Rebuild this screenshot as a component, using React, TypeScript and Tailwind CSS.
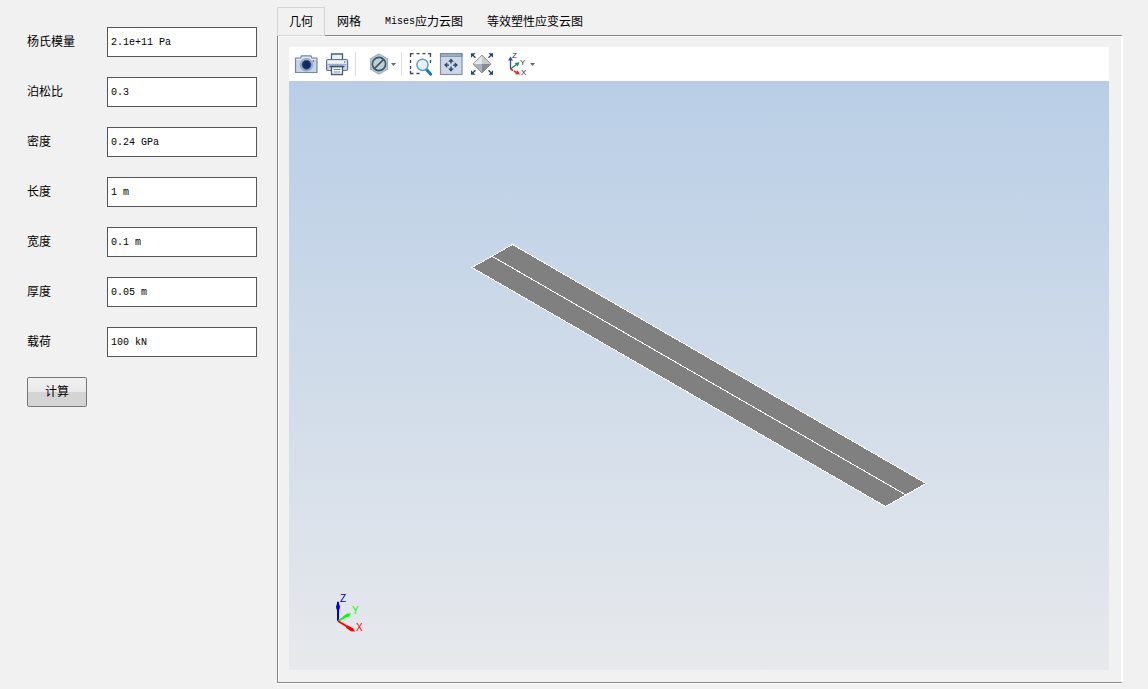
import { useState } from 'react'
import type { ReactNode } from 'react'

/* ── Data ── */

interface Field {
  id: string
  label: string
  value: string
}

const FIELDS: Field[] = [
  { id: 'young', label: '杨氏模量', value: '2.1e+11 Pa' },
  { id: 'poisson', label: '泊松比', value: '0.3' },
  { id: 'density', label: '密度', value: '0.24 GPa' },
  { id: 'length', label: '长度', value: '1 m' },
  { id: 'width', label: '宽度', value: '0.1 m' },
  { id: 'thickness', label: '厚度', value: '0.05 m' },
  { id: 'load', label: '载荷', value: '100 kN' },
]

const TABS = [
  { latin: '', text: '几何' },
  { latin: '', text: '网格' },
  { latin: 'Mises', text: '应力云图' },
  { latin: '', text: '等效塑性应变云图' },
]

/* ── Icons ── */

function Icon({ children }: { children: ReactNode }) {
  return (
    <svg viewBox="0 0 24 24" className="block h-6 w-6 shrink-0" fill="none" aria-hidden="true">
      {children}
    </svg>
  )
}

function CameraIcon() {
  return (
    <Icon>
      <path d="M1.500 6h5l1-2.200h9.500l1 2.200h5v14.500h-21.500z" fill="#c6d4e6" stroke="#7388a6" strokeWidth="1.200" strokeLinejoin="round" />
      <path d="M2.500 7.500h5l1-2.200h7.500l1 2.200h5" stroke="#e6edf5" />
      <circle cx="12.500" cy="12.800" r="6.300" fill="#a9bcd6" stroke="#7c91b2" strokeWidth=".6" />
      <circle cx="12.500" cy="12.800" r="4.500" fill="#122c60" stroke="#405f92" />
      <circle cx="19.500" cy="9" r=".8" fill="#34558a" />
    </Icon>
  )
}

function PrinterIcon() {
  return (
    <Icon>
      <path d="M6.500 8.500V2h11v6.500" fill="#edf2f8" stroke="#465d88" strokeWidth="1.300" />
      <rect x="1.600" y="7.500" width="21" height="11" rx="1.500" fill="#c9d4e3" stroke="#5f7397" strokeWidth="1.200" />
      <path d="M2.500 8.500h19v3h-19z" fill="#edf2f7" />
      <path d="M2.500 12.500h19" stroke="#a3b1c7" />
      <path d="M19 10h1.500" stroke="#2d497b" />
      <path d="M6.500 14.500h11v8h-11z" fill="#fff" stroke="#465d88" strokeWidth="1.300" />
      <path d="M4.500 14.500h15" stroke="#34507e" strokeWidth="1.400" />
      <path d="M8.500 17.500h7M8.500 20h7" stroke="#7287a7" />
    </Icon>
  )
}

function HexagonIcon() {
  return (
    <Icon>
      <path d="M12 2l8.500 4.800v10.400L12 22l-8.500-4.800V6.800z" fill="#b3cdd2" stroke="#9ab3b9" strokeWidth="1.200" />
      <circle cx="12" cy="12" r="6.600" fill="#bcd0d5" stroke="#3b5568" strokeWidth="1.600" />
      <path d="M16.600 7.400l-9.200 9.200" stroke="#3b5568" strokeWidth="1.600" />
    </Icon>
  )
}

function ZoomBoxIcon() {
  return (
    <Icon>
      <path
        d="M2.500 5V1.700h3M8.500 1.700h3M14.500 1.700h3M20 1.700h2.500V5M22.500 8v3M2.500 8v3M2.500 14v3M2.500 19v2.500h3M8.500 21.500h3"
        stroke="#3c4066"
        strokeWidth="1.300"
      />
      <path d="M18.500 17.500l4.200 4.700" stroke="#1679b8" strokeWidth="3" strokeLinecap="round" />
      <circle cx="14.500" cy="12.800" r="5.600" fill="#e4f1fa" stroke="#5f9fc8" strokeWidth="1.500" />
      <path d="M11.500 12.500c.3-1.800 1.500-2.700 3-2.700" stroke="#fff" strokeWidth="1.300" />
    </Icon>
  )
}

function FitIcon() {
  return (
    <Icon>
      <rect x="1.500" y="1.700" width="21.500" height="20.800" fill="#cdd8e6" stroke="#8192ae" strokeWidth="1.200" />
      <path d="M1 1.200h22.500v3.600H1z" fill="#7388aa" />
      <path d="M2 3h20" stroke="#c2d0e2" />
      <path d="M12 6.500l2.800 3.200H9.200zM12 19.700l2.800-3.200H9.200zM5 13.100l3.300-2.800v5.600zM19 13.100l-3.300-2.800v5.600z" fill="#2f4871" />
      <path d="M12 9v2.500M12 14.500V17M7.500 13.100H10M14 13.100h2.500" stroke="#2f4871" strokeWidth="1.400" />
    </Icon>
  )
}

function ExtentsIcon() {
  return (
    <Icon>
      <path d="M12 3l9 9-9 9-9-9z" fill="#b4b8bd" stroke="#747d88" strokeWidth=".8" />
      <path d="M12 3.500V12H3.500z" fill="#e5e7e9" />
      <path d="M12 3.500V12h8.500z" fill="#c7cbd0" />
      <path d="M3.500 12H12v8.500z" fill="#aeb3b9" />
      <path d="M12 12h8.500L12 20.500z" fill="#858c96" />
      <path d="M5.500 5.700L2.200 2.500M18.500 5.700l3.300-3.200M5.500 18.300l-3.300 3.200M18.500 18.300l3.300 3.200" stroke="#2b4674" strokeWidth="1.400" />
      <path d="M1 1.200h4.500L1 5.700zM23 1.200h-4.500L23 5.700zM1 22.800h4.500L1 18.300zM23 22.800h-4.500l4.500-4.500z" fill="#2b4674" />
    </Icon>
  )
}

function AxesIcon() {
  return (
    <Icon>
      <path d="M4.500 17V7" stroke="#2854ae" strokeWidth="1.300" />
      <path d="M4.500 4.500L7 8.500H2z" fill="#2854ae" />
      <path d="M4.500 17l6-4.500" stroke="#16903c" strokeWidth="1.400" />
      <path d="M13.500 10.300l-1.700 4.200-3-3.600z" fill="#16903c" />
      <path d="M4.500 17l6 3.500" stroke="#ee2328" strokeWidth="1.500" strokeDasharray="3 1" />
      <path d="M14 22.500l-5-.2 2.600-4z" fill="#ee2328" />
      <g fill="#2d2d2d" stroke="none" className="font-['Liberation_Sans',sans-serif] text-[8px]">
        <text x="6" y="6">Z</text>
        <text x="14" y="13">Y</text>
        <text x="15" y="23">X</text>
      </g>
    </Icon>
  )
}

function Caret() {
  return (
    <svg viewBox="0 0 5 3" className="block h-[3px] w-[5px] shrink-0" aria-hidden="true">
      <path d="M0 0h5L2.500 3z" fill="#666" />
    </svg>
  )
}

/* ── Toolbar ── */

function ToolButton({ label, children }: { label: string; children: ReactNode }) {
  return (
    <button type="button" aria-label={label} className="flex items-center">
      {children}
    </button>
  )
}

function Separator() {
  return <div className="h-6 w-px bg-[#dcdcdc]" />
}

function Toolbar() {
  return (
    <div className="flex h-[34px] shrink-0 items-center bg-white pl-[5px]">
      <div className="mr-1.5 flex gap-[7px]">
        <ToolButton label="截图"><CameraIcon /></ToolButton>
        <ToolButton label="打印"><PrinterIcon /></ToolButton>
      </div>
      <Separator />
      <div className="mr-[5px] ml-[11px] flex">
        <ToolButton label="显示">
          <HexagonIcon />
          <Caret />
        </ToolButton>
      </div>
      <Separator />
      <div className="mr-3 ml-1.5 flex gap-[7px]">
        <ToolButton label="框选缩放"><ZoomBoxIcon /></ToolButton>
        <ToolButton label="适应窗口"><FitIcon /></ToolButton>
        <ToolButton label="全部显示"><ExtentsIcon /></ToolButton>
      </div>
      <ToolButton label="视图方向">
        <AxesIcon />
        <Caret />
      </ToolButton>
    </div>
  )
}

/* ── Viewport ── */

function Viewport() {
  return (
    <div className="relative min-h-0 flex-1 bg-linear-to-b from-[#b9cee6] to-[#e7e9ec]">
      {/* Plate */}
      <svg viewBox="0 0 820 589" className="block h-full w-full" role="img" aria-label="几何">
        <g stroke="#fff" shapeRendering="crispEdges" strokeLinejoin="round">
          <path d="M183 186.500L223.500 163.500L637 402.500L596.500 425.500z" fill="#808080" />
          <path d="M203.500 175.500L617 414" />
        </g>
      </svg>

      {/* Orientation triad */}
      <svg viewBox="0 0 40 44" className="absolute bottom-9 left-10 h-11 w-10" aria-hidden="true">
        <path d="M9 31V12" stroke="#0000e6" strokeWidth="2" />
        <path d="M9 11l2 5.500-.5 3h-3l-.5-3z" fill="#0000e6" />
        <path d="M9 31l10-5.800" stroke="#00ff00" strokeWidth="2" />
        <path d="M22 23.500l-2 2.800-5 2-1-1.800 4-3z" fill="#00ff00" />
        <path d="M9 31l14 8.500" stroke="#ff0000" strokeWidth="2" />
        <path d="M26 41.500l-4-.3-5-3.400 1.500-2.600 5.500 3z" fill="#ff0000" />
        <g className="font-['Liberation_Sans',sans-serif] text-[10px]">
          <text x="11" y="12" fill="#0000c8">Z</text>
          <text x="23" y="24" fill="#00ff00">Y</text>
          <text x="27" y="41" fill="#ff0000">X</text>
        </g>
      </svg>
    </div>
  )
}

/* ── Page ── */

export default function App() {
  const [activeTab, setActiveTab] = useState(0)
  const [values, setValues] = useState<Record<string, string>>(
    Object.fromEntries(FIELDS.map((f) => [f.id, f.value])),
  )

  return (
    <div className="flex min-h-screen bg-[#f1f1f1] font-['Liberation_Sans','Noto_Sans_CJK_SC',sans-serif] text-xs text-black">
      {/* Parameters */}
      <form
        className="flex w-[277px] shrink-0 flex-col items-start gap-5 pt-[27px] pr-5 pl-[27px]"
        onSubmit={(e) => e.preventDefault()}
      >
        {FIELDS.map((field) => (
          <div key={field.id} className="flex w-full items-center">
            <label htmlFor={field.id} className="w-20 shrink-0">{field.label}</label>
            <input
              id={field.id}
              type="text"
              value={values[field.id]}
              onChange={(e) => setValues({ ...values, [field.id]: e.target.value })}
              className="h-[30px] w-full min-w-0 border border-[#555555] bg-white px-[3px] font-['Liberation_Mono',monospace] text-[10px] outline-none"
            />
          </div>
        ))}
        <button
          type="submit"
          className="h-[30px] w-[60px] rounded-xs border border-[#777777] bg-linear-to-b from-[#f1f1f1] from-0% via-[#e9e9e9] via-50% to-[#d4d4d4] to-50%"
        >
          计算
        </button>
      </form>

      {/* Results */}
      <main className="flex min-w-0 flex-1 flex-col pt-[7px] pr-[25px] pb-1.5">
        <div role="tablist" className="z-10 -mb-px flex">
          {TABS.map((tab, i) => (
            <button
              key={tab.text}
              type="button"
              role="tab"
              aria-selected={i === activeTab}
              onClick={() => setActiveTab(i)}
              className={`flex h-[29px] items-center border px-[11px] whitespace-nowrap ${
                i === activeTab ? 'border-[#d5d5d5] bg-[#f1f1f1]' : 'border-transparent'
              }`}
            >
              {tab.latin && (
                <span className="font-['Liberation_Mono',monospace] text-[10px]">{tab.latin}</span>
              )}
              {tab.text}
            </button>
          ))}
        </div>
        <div className="flex min-h-0 flex-1 flex-col border-y border-r-2 border-l border-y-[#86868c] border-r-white border-l-[#86868c] pt-[11px] pr-3 pb-3 pl-[11px] shadow-[0_1px_0_#fff,inset_1px_1px_0_#fff]">
          <Toolbar />
          <Viewport />
        </div>
      </main>
    </div>
  )
}
